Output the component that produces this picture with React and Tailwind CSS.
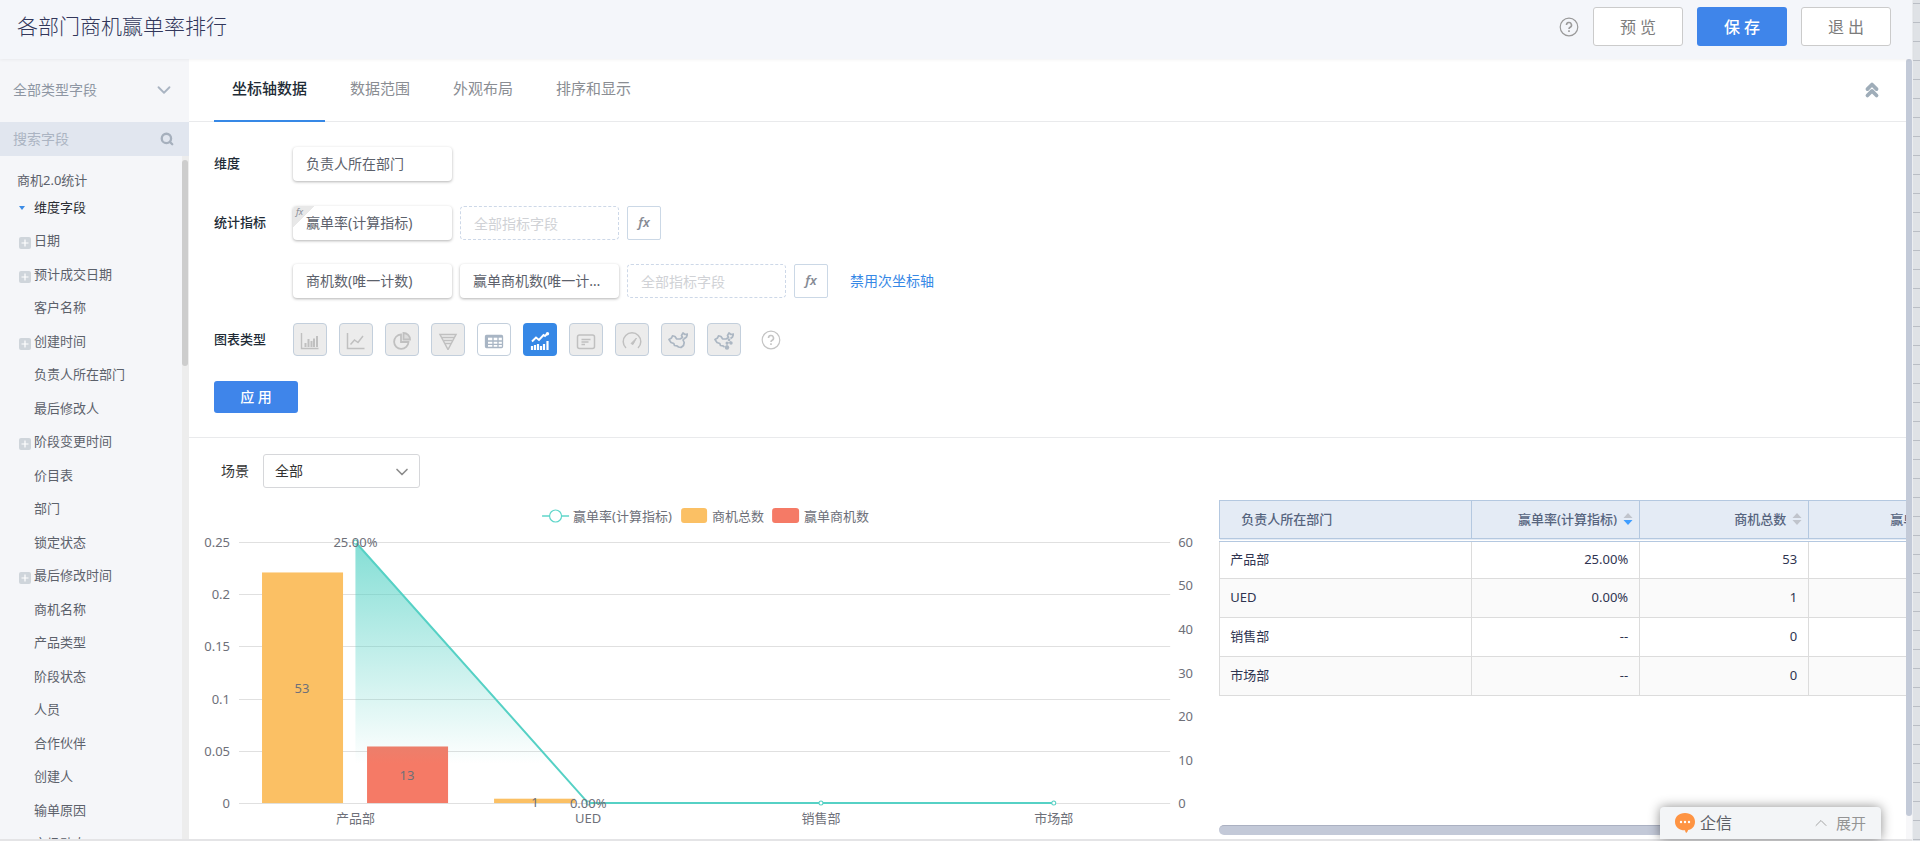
import { useState } from "react";
import { ChevronDown, ChevronUp, ChevronsUp, Search } from "lucide-react";

const fields = [
  { title: "日期", group: true },
  { title: "预计成交日期", group: true },
  { title: "客户名称" },
  { title: "创建时间", group: true },
  { title: "负责人所在部门" },
  { title: "最后修改人" },
  { title: "阶段变更时间", group: true },
  { title: "价目表" },
  { title: "部门" },
  { title: "锁定状态" },
  { title: "最后修改时间", group: true },
  { title: "商机名称" },
  { title: "产品类型" },
  { title: "阶段状态" },
  { title: "人员" },
  { title: "合作伙伴" },
  { title: "创建人" },
  { title: "输单原因" },
  { title: "市场动态" },
];

const tabs = ["坐标轴数据", "数据范围", "外观布局", "排序和显示"];

const rows = [
  { name: "产品部", rate: "25.00%", total: 53, won: 13 },
  { name: "UED", rate: "0.00%", total: 1, won: 0 },
  { name: "销售部", rate: "--", total: 0, won: 0 },
  { name: "市场部", rate: "--", total: 0, won: 0 },
];

const chinaOutline =
  "M1 7.500L3.500 6L4.500 3.800L7 4.500L8.500 6.800L12 7L14.500 5.500L13.500 3.500L15 1L17 2.500L19.500 2L18.500 5L16.500 6.500L15 8L16.200 10.500L15.500 13.500L13 15.500L10.500 15L9 13.800L6.500 13.500L5.800 11.500L3 10.500Z";

const chartTypes = [
  {
    name: "柱状图",
    icon: (
      <g stroke="currentColor" fill="none">
        <path d="M1.500 1v15.500h17" strokeWidth="1.400" />
        <path d="M5.500 15v-4M8.500 15V7M11.500 15V9M14 15V6.500M17 15V4" strokeWidth="2" />
      </g>
    ),
  },
  {
    name: "折线图",
    icon: (
      <g stroke="currentColor" fill="none" strokeWidth="1.500">
        <path d="M1.500 1v15.500h17" />
        <path d="M4.500 12.500l4-4.500 3.500 2.500L17 4" />
      </g>
    ),
  },
  {
    name: "饼图",
    icon: (
      <g stroke="currentColor" fill="none" strokeWidth="1.800">
        <path d="M9 2.500a7.200 7.200 0 1 0 7.500 7.500H9z" />
        <path d="M11.500 1v6.500H18A6.500 6.500 0 0 0 11.500 1z" fill="currentColor" fillOpacity="0.350" />
      </g>
    ),
  },
  {
    name: "漏斗图",
    icon: (
      <g stroke="currentColor" fill="none" strokeWidth="1.500">
        <path d="M2 2.500h16L10 17.500z" />
        <path d="M4 5.500h12M5.500 8.500h9M7 11.500h6" />
      </g>
    ),
  },
  {
    name: "表格",
    enabled: true,
    icon: (
      <g stroke="currentColor" fill="none" strokeWidth="1.300">
        <rect x="1.500" y="3.500" width="17" height="12" rx="1" />
        <path d="M2 4.500h16" strokeWidth="2.400" />
        <path d="M3 5v10" strokeWidth="2" />
        <path d="M2 9h16M2 12.300h16M9 5v10M14 5v10" />
      </g>
    ),
  },
  {
    name: "双轴图",
    active: true,
    icon: (
      <g stroke="currentColor" fill="none">
        <path d="M2 18v-4M5 18v-5M8 18v-6M11 18v-4M14 18v-6M17.500 18V9" strokeWidth="2.200" />
        <path d="M2 9.500l4-4 3 2.500 4.500-5 1.500 1 2.500-2.500" strokeWidth="1.900" />
        <circle cx="17.500" cy="1.800" r="1.700" fill="currentColor" stroke="none" />
      </g>
    ),
  },
  {
    name: "指标卡",
    icon: (
      <g stroke="currentColor" fill="none" strokeWidth="1.500">
        <rect x="1.500" y="3" width="17" height="13.500" rx="2" />
        <path d="M5.500 7.500h9M5.500 10h7M5.500 12.500h3.500" strokeWidth="1.300" />
      </g>
    ),
  },
  {
    name: "仪表盘",
    icon: (
      <g stroke="currentColor" fill="none" strokeWidth="1.500">
        <path d="M4 16a8.800 8.800 0 1 1 12 0" />
        <path d="M9 11.500l5.500-5.500-3.500 6.500z" fill="currentColor" strokeWidth="1" />
      </g>
    ),
  },
  {
    name: "区域地图",
    map: true,
    icon: <path d={chinaOutline} stroke="currentColor" fill="none" strokeWidth="1.700" strokeLinejoin="round" />,
  },
  {
    name: "散点地图",
    map: true,
    icon: (
      <g stroke="currentColor" fill="none" strokeWidth="1.700" strokeLinejoin="round">
        <path d="M10.500 15L9 13.800L6.500 13.500L5.800 11.500L3 10.500L1 7.500L3.500 6L4.500 3.800L7 4.500L8.500 6.800L12 7L14.500 5.500L13.500 3.500L15 1L17 2.500L19.500 2L18.500 5L16.500 6.500" />
        <path d="M13 15.500V11l4-.5-2-2.500" strokeWidth="1" />
        <g fill="currentColor" stroke="none">
          <circle cx="13" cy="15.500" r="2.200" />
          <circle cx="13" cy="11" r="1.500" />
          <circle cx="17" cy="11" r="1.700" />
          <circle cx="15" cy="7.800" r="1.400" />
        </g>
      </g>
    ),
  },
];

const HelpIcon = ({ className }) => (
  <svg viewBox="0 0 20 20" className={className} fill="none" stroke="currentColor" aria-hidden="true">
    <circle cx="10" cy="10" r="8.800" strokeWidth="1.200" />
    <path d="M7.500 8a2.500 2.500 0 1 1 3.700 2.200c-.9.500-1.200.9-1.200 1.800" strokeWidth="1.600" />
    <path d="M10 13.300v1.600" strokeWidth="1.600" />
  </svg>
);

const Chip = ({ children, formula }) => (
  <button
    type="button"
    className="relative w-[159px] h-[34px] px-[13px] text-left text-sm text-[#5c616b] bg-white rounded overflow-hidden shadow-[0_1px_3px_rgba(0,0,0,0.3)] truncate"
  >
    {formula && (
      <span className="absolute left-0 top-0 size-[22px] bg-[linear-gradient(135deg,#e8e8e8_50%,transparent_50%)]">
        <span className="absolute left-[3px] top-0 text-[9px] leading-3 italic text-[#8a8f99]">fx</span>
      </span>
    )}
    {children}
  </button>
);

const EmptyChip = () => (
  <input
    aria-label="全部指标字段"
    placeholder="全部指标字段"
    className="w-[159px] h-[34px] px-[13px] text-sm bg-transparent border border-dashed border-[#cdd8e8] rounded outline-none placeholder:text-[#d0d2d6]"
  />
);

const FormulaButton = () => (
  <button
    type="button"
    className="size-[34px] border border-[#cbd8e6] rounded-xs bg-white text-[13px] italic font-semibold text-[#878c95]"
  >
    fx
  </button>
);

const Sidebar = () => (
  <aside className="flex flex-col w-[189px] shrink-0 bg-[#f5f6f9]">
    <div className="relative h-[63px] shrink-0">
      <select
        aria-label="字段类型"
        className="w-full h-full pl-[13px] pb-[2px] appearance-none bg-transparent text-sm text-[#8e96a3] outline-none"
      >
        <option>全部类型字段</option>
      </select>
      <ChevronDown className="absolute right-[14px] top-5 size-[22px] text-[#a9b4c2] pointer-events-none" strokeWidth={2} />
    </div>
    <div className="flex items-center h-[34px] shrink-0 pl-[13px] pr-[15px] bg-[#e1e6ef]">
      <input
        aria-label="搜索字段"
        placeholder="搜索字段"
        className="w-full min-w-0 bg-transparent text-sm outline-none placeholder:text-[#abb4c2]"
      />
      <Search className="size-[14px] shrink-0 text-[#a6b0bd]" strokeWidth={4} />
    </div>
    <div className="flex flex-1 min-h-0">
      <div className="flex-1 overflow-hidden text-[13px] text-[#5c616b]">
        <p className="pl-[17px] mt-3 h-6 leading-6">商机2.0统计</p>
        <button type="button" className="flex items-center h-8 text-[#2a2d33]">
          <span className="ml-[19px] mr-[9px] border-x-[3px] border-t-4 border-x-transparent border-t-[#3b8be6]" />
          维度字段
        </button>
        <ul>
          {fields.map((field) => (
            <li key={field.title} className="odd:h-[34px] even:h-[33px]">
              <button type="button" className="flex items-center w-full h-full pl-[19px] gap-[3px]">
                <span className="flex w-3 pt-1">
                  {field.group && (
                    <svg viewBox="0 0 12 12" className="size-3" aria-hidden="true">
                      <rect width="12" height="12" rx="2" fill="#cfd5db" />
                      <path d="M6 2.500v7M2.500 6h7" stroke="#fff" strokeWidth="1.200" />
                    </svg>
                  )}
                </span>
                {field.title}
              </button>
            </li>
          ))}
        </ul>
      </div>
      <div className="w-[7px] pt-1 bg-[#ededed]">
        <div className="w-[6px] h-[206px] rounded-full bg-[#cdcdcd]" />
      </div>
    </div>
  </aside>
);

// Plot area of the chart, in svg units
const plot = { left: 50, right: 981, top: 43, bottom: 304 };
const step = (plot.right - plot.left) / 4;
const leftTicks = ["0.25", "0.2", "0.15", "0.1", "0.05", "0"];
const rightTicks = [60, 50, 40, 30, 20, 10, 0];
const height = plot.bottom - plot.top;
const center = (i) => plot.left + step * (i + 0.5);

const Chart = () => (
  <svg viewBox="0 1 1030 340" className="w-full text-[13px]" fill="#6e7079" role="img" aria-label="各部门商机赢单率排行">
    <defs>
      <linearGradient id="rate" x1="0" y1="0" x2="0" y2="1">
        <stop offset="0" stopColor="#4fd0c3" stopOpacity="0.7" />
        <stop offset="0.850" stopColor="#4fd0c3" stopOpacity="0" />
      </linearGradient>
    </defs>

    {/* Legend */}
    <path d="M353 17h27" stroke="#5fd6ca" strokeWidth="1.500" />
    <circle cx="366.500" cy="17" r="6" fill="#fff" stroke="#5fd6ca" strokeWidth="1.200" />
    <text x="384" y="22">赢单率(计算指标)</text>
    <rect x="492" y="9" width="26" height="15" rx="3" fill="#fbc064" />
    <text x="523" y="22">商机总数</text>
    <rect x="583" y="9" width="27" height="15" rx="3" fill="#f57a66" />
    <text x="615" y="22">赢单商机数</text>

    {/* Axes */}
    {leftTicks.map((tick, i) => {
      const y = plot.top + (height * i) / 5;
      return (
        <g key={tick}>
          <path d={`M${plot.left} ${Math.round(y) + 0.5}H${plot.right}`} stroke="#e0e0e0" />
          <text x="41" y={y + 5} textAnchor="end">{tick}</text>
        </g>
      );
    })}
    {rightTicks.map((tick, i) => (
      <text key={tick} x="989" y={plot.top + (height * i) / 6 + 5}>{tick}</text>
    ))}
    {rows.map((row, i) => (
      <text key={row.name} x={center(i)} y="324" textAnchor="middle">{row.name}</text>
    ))}

    {/* Bars */}
    <rect x="73" y={plot.bottom - (height * 53) / 60} width="81" height={(height * 53) / 60} fill="#fbc064" />
    <rect x="178" y={plot.bottom - (height * 13) / 60} width="81" height={(height * 13) / 60} fill="#f57a66" />
    <rect x="305" y={plot.bottom - height / 60} width="81" height={height / 60} fill="#fbc064" />

    {/* Win rate line */}
    <path d={`M${center(0)} ${plot.top}L${center(1)} ${plot.bottom}H${center(0)}Z`} fill="url(#rate)" />
    <path
      d={`M${center(0)} ${plot.top}L${center(1)} ${plot.bottom}H${center(3)}`}
      fill="none"
      stroke="#56d1c5"
      strokeWidth="2"
    />
    {[0, 1, 2, 3].map((i) => (
      <circle key={i} cx={center(i)} cy={i ? plot.bottom : plot.top} r="2" fill="#fff" stroke="#56d1c5" />
    ))}

    <text x="113" y="194" textAnchor="middle">53</text>
    <text x="218" y="281" textAnchor="middle">13</text>
    <text x="346" y="308" textAnchor="middle">1</text>
    <text x={center(0)} y="48" textAnchor="middle">25.00%</text>
    <text x={center(1)} y="309" textAnchor="middle">0.00%</text>
  </svg>
);

const SortIcon = ({ desc }) => (
  <svg viewBox="0 0 10 12" className="w-[10px] h-3 shrink-0" aria-hidden="true">
    <path d="M5 0l4.500 5h-9z" fill="#c0c4cc" />
    <path d="M5 12L.5 7h9z" fill={desc ? "#409eff" : "#c0c4cc"} />
  </svg>
);

const DataTable = () => (
  <table className="table-fixed w-[758px] border-collapse text-[13px] text-[#2f3450]">
    <colgroup>
      <col className="w-[252px]" />
      <col className="w-[168px]" />
      <col className="w-[169px]" />
      <col className="w-[169px]" />
    </colgroup>
    <thead>
      <tr className="h-[39px] bg-[#e4ebf5] text-[#56647e]">
        <th className="pl-[21px] text-left font-medium border border-[#b4c8e0] border-b-4 [border-bottom-style:double]">
          负责人所在部门
        </th>
        {["赢单率(计算指标)", "商机总数", "赢单商机数"].map((title, i) => (
          <th
            key={title}
            className="pr-[6px] font-medium border border-[#b4c8e0] border-b-4 [border-bottom-style:double]"
          >
            <button type="button" className="flex items-center justify-end w-full gap-[6px]">
              {title}
              <SortIcon desc={i === 0} />
            </button>
          </th>
        ))}
      </tr>
    </thead>
    <tbody>
      {rows.map((row) => (
        <tr key={row.name} className="h-[39px] even:bg-[#fafafa]">
          <td className="pl-[10px] border border-[#dcdcdc]">{row.name}</td>
          <td className="pr-[11px] text-right border border-[#dcdcdc]">{row.rate}</td>
          <td className="pr-[11px] text-right border border-[#dcdcdc]">{row.total}</td>
          <td className="pr-[11px] text-right border border-[#dcdcdc]">{row.won}</td>
        </tr>
      ))}
    </tbody>
  </table>
);

const App = () => {
  const [activeTab, setActiveTab] = useState(tabs[0]);

  return (
    <div className="relative flex h-screen overflow-hidden bg-white font-['Noto_Sans','Noto_Sans_CJK_SC',sans-serif]">
      <div className="flex flex-col flex-1 min-w-0 border-b-2 border-[#e4e4e6]">
        <header className="relative z-10 flex items-center h-[59px] shrink-0 pl-[17px] pr-[21px] pb-[6px] bg-[#f4f6fa] shadow-[0_1px_3px_rgba(0,0,0,0.05)]">
          <h1 className="flex-1 text-[21px] font-light text-[#32375a]">各部门商机赢单率排行</h1>
          <HelpIcon className="size-5 mr-[14px] text-[#9a9a9a]" />
          <div className="flex gap-[14px] text-base">
            <button type="button" className="w-[90px] h-[39px] border border-[#cbcbcb] rounded-[3px] bg-white text-[#7c7c7c]">
              预 览
            </button>
            <button type="button" className="w-[90px] h-[39px] rounded-[3px] bg-[#3f85ea] font-medium text-white">
              保 存
            </button>
            <button type="button" className="w-[90px] h-[39px] border border-[#cbcbcb] rounded-[3px] bg-white text-[#7c7c7c]">
              退 出
            </button>
          </div>
        </header>

        <div className="flex flex-1 min-h-0">
          <Sidebar />

          <main className="flex flex-col flex-1 min-w-0">
            {/* Tabs */}
            <div className="flex items-center justify-between h-[63px] shrink-0 pl-[25px] pr-[23px] border-b border-[#e9eaec]">
              <div className="flex gap-[7px] h-full -mb-px">
                {tabs.map((tab) => (
                  <button
                    key={tab}
                    type="button"
                    onClick={() => setActiveTab(tab)}
                    className={
                      tab === activeTab
                        ? "px-[18px] pb-[3px] text-[15px] font-medium text-[#212b36] border-b-2 border-[#3688e6]"
                        : "px-[18px] pb-[3px] text-[15px] text-[#8a8d93] border-b-2 border-transparent"
                    }
                  >
                    {tab}
                  </button>
                ))}
              </div>
              <button type="button" aria-label="收起">
                <ChevronsUp className="size-[22px] text-[#9fadb9]" strokeWidth={4} />
              </button>
            </div>

            {/* Settings */}
            <section className="flex flex-col gap-[25px] shrink-0 pl-[25px] pt-[25px] pb-6 border-b border-[#e9eaec] text-[13px] text-[#212b36]">
              <div className="flex">
                <span className="w-[79px] leading-8 font-medium">维度</span>
                <Chip>负责人所在部门</Chip>
              </div>
              <div className="flex">
                <span className="w-[79px] leading-8 font-medium">统计指标</span>
                <div className="flex flex-col gap-6">
                  <div className="flex gap-2">
                    <Chip formula>赢单率(计算指标)</Chip>
                    <EmptyChip />
                    <FormulaButton />
                  </div>
                  <div className="flex items-center gap-2">
                    <Chip>商机数(唯一计数)</Chip>
                    <Chip>赢单商机数(唯一计数)</Chip>
                    <EmptyChip />
                    <FormulaButton />
                    <a href="#axis" className="ml-[14px] text-sm text-[#3688e6]">禁用次坐标轴</a>
                  </div>
                </div>
              </div>
              <div className="flex">
                <span className="w-[79px] leading-8 font-medium">图表类型</span>
                <div className="flex items-center gap-3">
                  {chartTypes.map((type) => (
                    <button
                      key={type.name}
                      type="button"
                      aria-label={type.name}
                      className={
                        type.active
                          ? "flex items-center justify-center w-[34px] h-[33px] rounded bg-[#3688e6] text-white"
                          : type.enabled
                            ? "flex items-center justify-center w-[34px] h-[33px] rounded border border-[#c3cfdc] bg-white text-[#a8b5c4]"
                            : type.map
                              ? "flex items-center justify-center w-[34px] h-[33px] rounded border border-[#c3cfdc] bg-[#ececec] text-[#acb7c3]"
                              : "flex items-center justify-center w-[34px] h-[33px] rounded border border-[#c3cfdc] bg-[#ececec] text-[#c0c0c0]"
                      }
                    >
                      <svg viewBox="0 0 20 18" className="w-5 h-[18px] mt-[2px]" aria-hidden="true">{type.icon}</svg>
                    </button>
                  ))}
                  <HelpIcon className="size-5 ml-2 text-[#c4c4c4]" />
                </div>
              </div>
              <button type="button" className="w-[84px] h-8 rounded-[3px] bg-[#3f85ea] text-sm font-medium text-white">
                应 用
              </button>
            </section>

            {/* Result */}
            <div className="flex items-center shrink-0 pl-8 pt-4 pb-3 text-sm text-[#333]">
              <label htmlFor="scene" className="pr-[14px]">场景</label>
              <div className="relative">
                <select
                  id="scene"
                  className="w-[157px] h-[34px] pl-[11px] appearance-none border border-[#d6d7da] rounded-[3px] bg-white outline-none"
                >
                  <option>全部</option>
                </select>
                <ChevronDown className="absolute right-2 top-2 size-5 text-[#8c8c8c] pointer-events-none" strokeWidth={2} />
              </div>
            </div>
            <div className="grid grid-cols-[3fr_2fr] flex-1 min-h-0 overflow-hidden">
              <Chart />
              <div className="flex flex-col justify-between min-w-0 overflow-hidden pb-1">
                <DataTable />
                <div className="h-[10px] w-[600px] rounded-full border-t border-[#abb1c2] bg-[#c3c9d8]" />
              </div>
            </div>
          </main>

          <div className="w-[6px] h-full bg-[#f7f7f9]">
            <div className="h-[97%] rounded-full bg-[#c3cad8]" />
          </div>
        </div>
      </div>

      {/* Page behind the editor */}
      <div className="w-2 border-l border-[#eceef1] bg-[repeating-linear-gradient(to_bottom,#dfe2e6_0px,#dfe2e6_3px,#babec5_3px,#babec5_4px,#dfe2e6_4px,#dfe2e6_19px)]" />

      <div className="absolute right-[39px] bottom-[2px] flex items-center w-[221px] h-8 pl-[14px] pr-[15px] rounded-t bg-[#f3f5f7] shadow-[0_0_12px_rgba(0,0,0,0.45)]">
        <svg viewBox="0 0 22 22" className="size-[22px]" aria-hidden="true">
          <path d="M11 1c6.200 0 10 3.500 10 8.700 0 5-3.300 7.800-7 8.400 0 1-.6 2.200-1.900 2.900-.6-.8-.9-1.700-1.100-2.700C5 18.300 1 15 1 9.700 1 4.500 4.800 1 11 1z" fill="#fe9443" />
          <g fill="#fff">
            <circle cx="7" cy="10" r="1.200" />
            <circle cx="11" cy="10" r="1.200" />
            <circle cx="15" cy="10" r="1.200" />
          </g>
        </svg>
        <span className="flex-1 pl-1 text-base text-[#5c6066]">企信</span>
        <button type="button" className="flex items-center gap-[5px] text-[15px] text-[#949494]">
          <ChevronUp className="size-5" strokeWidth={1} />
          展开
        </button>
      </div>
    </div>
  );
};

export default App;
